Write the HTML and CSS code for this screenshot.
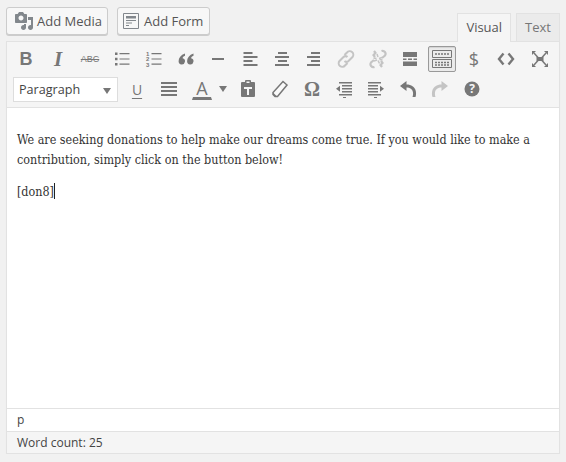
FILE: index.html
```html
<!DOCTYPE html>
<html lang="en">

<head>
    <meta charset="UTF-8">
    <meta name="viewport" content="width=device-width, initial-scale=1.0">
    <title>Edit Post</title>
    <link rel="stylesheet" href="styles.css">
</head>

<body>
    <div class="editor-top">
        <div class="media-buttons">
            <button class="btn btn-media" type="button">
                <svg class="btn-icon" width="20" height="20" viewBox="0 0 20 20">
                    <path fill="#82878c" fill-rule="evenodd" d="M13 11V4c0-.55-.45-1-1-1h-1.670L9 1H5L3.670 3H2c-.55 0-1 .45-1 1v7c0 .55.45 1 1 1h10c.55 0 1-.45 1-1zM7 4.500c1.380 0 2.500 1.120 2.500 2.500S8.380 9.500 7 9.500 4.500 8.380 4.500 7 5.620 4.500 7 4.500zM14 6h5v10.500c0 1.380-1.120 2.500-2.500 2.500S14 17.880 14 16.500s1.120-2.500 2.500-2.500c.17 0 .34.020.5.050V9h-3V6zm-4 8.050V13h2v3.500c0 1.380-1.120 2.500-2.500 2.500S7 17.880 7 16.500 8.120 14 9.500 14c.17 0 .34.020.5.050z"/>
                </svg>
                Add Media
            </button>
            <button class="btn btn-form" type="button">
                <svg class="btn-icon" width="18" height="18" viewBox="0 0 18 18">
                    <path fill="none" stroke="#82878c" d="M1.500 1.500h15v15h-15z"/>
                    <path fill="#82878c" d="M4 4h10v2.500H4zM4 8h10v1H4zM4 10.500h6v1H4zM4 13h3v1H4z"/>
                </svg>
                Add Form
            </button>
        </div>
        <div class="tabs">
            <span class="tab tab-active">Visual</span>
            <span class="tab">Text</span>
        </div>
    </div>

    <div class="editor">
        <div class="toolbar">
            <div class="tool-row">
                <span class="tool glyph-b">B</span>
                <span class="tool glyph-i">I</span>
                <span class="tool glyph-abc">ABC</span>
                <span class="tool">
                    <svg width="20" height="20" viewBox="0 0 20 20">
                        <path fill="#777" d="M3 3.500h2.500V6H3zM3 8.800h2.500v2.500H3zM3 14h2.500v2.500H3z"/>
                        <path fill="#777" d="M7.500 4h10v1.200h-10zM7.500 9.400h10v1.200h-10zM7.500 14.600h10v1.200h-10z"/>
                    </svg>
                </span>
                <span class="tool">
                    <svg width="20" height="20" viewBox="0 0 20 20">
                        <text class="ol-num" x="2" y="6.500">1</text>
                        <text class="ol-num" x="2" y="12">2</text>
                        <text class="ol-num" x="2" y="17.500">3</text>
                        <path fill="#777" d="M7.500 4h10v1.200h-10zM7.500 9.400h10v1.200h-10zM7.500 14.600h10v1.200h-10z"/>
                    </svg>
                </span>
                <span class="tool">
                    <svg width="20" height="20" viewBox="0 0 20 20">
                        <path fill="#777" d="M9 4.500v2.200c-1.500.6-2.300 1.400-2.400 2.500a3.200 3.200 0 1 1-4 3.100C2.600 8.800 4.800 6 9 4.500zM17.500 4.500v2.200c-1.500.6-2.300 1.400-2.400 2.500a3.200 3.200 0 1 1-4 3.100c0-3.500 2.200-6.300 6.400-7.800z"/>
                    </svg>
                </span>
                <span class="tool">
                    <svg width="20" height="20" viewBox="0 0 20 20"><path fill="#777" d="M4 9h12v2H4z"/></svg>
                </span>
                <span class="tool">
                    <svg width="20" height="20" viewBox="0 0 20 20"><path fill="#777" d="M3.500 3h9v2h-9zM3.500 7h14v2h-14zM3.500 11h9v2h-9zM3.500 15h14v2h-14z"/></svg>
                </span>
                <span class="tool">
                    <svg width="20" height="20" viewBox="0 0 20 20"><path fill="#777" d="M6 3h9v2H6zM3 7h14v2H3zM6 11h9v2H6zM3 15h14v2H3z"/></svg>
                </span>
                <span class="tool">
                    <svg width="20" height="20" viewBox="0 0 20 20"><path fill="#777" d="M7 3h9v2H7zM3 7h13v2H3zM7 11h9v2H7zM3 15h13v2H3z"/></svg>
                </span>
                <span class="tool">
                    <svg width="20" height="20" viewBox="0 0 20 20">
                        <path fill="none" stroke="#c4c4c4" stroke-width="2" d="M8.500 6l2.500-2.500a3 3 0 0 1 5.500 4.500l-4 4a3 3 0 0 1-4 0M11.500 14l-2.500 2.500a3 3 0 0 1-5.500-4.500l4-4a3 3 0 0 1 4 0"/>
                    </svg>
                </span>
                <span class="tool">
                    <svg width="20" height="20" viewBox="0 0 20 20">
                        <path fill="none" stroke="#c4c4c4" stroke-width="2.200" d="M6 2l1.500 2-2 2 1.500 2M13.500 2a3 3 0 0 1 3.500 4.500l-3 2.500M14 18l-1.500-2 2-2-1.500-2M6.500 18A3 3 0 0 1 3 13.500l3-2.500"/>
                        <path fill="none" stroke="#c4c4c4" stroke-width="1.500" d="M10 8l-1-3M11 9.500l3-1M9 11l-3 1M10 11.500l1.500 3M8.500 9.500l-3-.5M11.500 10.500l3 .5"/>
                    </svg>
                </span>
                <span class="tool">
                    <svg width="20" height="20" viewBox="0 0 20 20">
                        <path fill="#777" d="M3 3h14v5H3zM3 9.500h3.500V11H3zM8 9.500h4V11H8zM13.500 9.500H17V11h-3.500zM3 12.500h14V17H3z"/>
                    </svg>
                </span>
                <span class="tool tool-active">
                    <svg width="24" height="20" viewBox="0 0 24 20">
                        <path fill="none" stroke="#777" d="M2.500 1.500h19v7h-19zM2.500 10.500h19v8h-19z"/>
                        <path fill="none" stroke="#777" stroke-width="1.500" stroke-dasharray="2 1" d="M5 5h14M5 13.500h14M5 16h14"/>
                    </svg>
                </span>
                <span class="tool glyph-dollar">$</span>
                <span class="tool">
                    <svg width="20" height="20" viewBox="0 0 20 20">
                        <path fill="none" stroke="#777" stroke-width="2.400" d="M7.500 4.500L3 10l4.500 5.500M12.500 4.500L17 10l-4.500 5.500"/>
                    </svg>
                </span>
                <span class="tool tool-wide">
                    <svg width="20" height="20" viewBox="0 0 20 20">
                        <path fill="#777" d="M6.500 8h7v4h-7z"/>
                        <path fill="none" stroke="#777" stroke-width="1.500" d="M4 4l4 4.500M16 4l-4 4.500M4 16l4-4.500M16 16l-4-4.500"/>
                        <path fill="#777" d="M2 2h4L2 6zM18 2v4l-4-4zM2 18v-4l4 4zM18 18h-4l4-4z"/>
                    </svg>
                </span>
            </div>
            <div class="tool-row tool-row-second">
                <div class="format-select">
                    Paragraph
                    <span class="select-arrow"></span>
                </div>
                <span class="tool glyph-u">U</span>
                <span class="tool">
                    <svg width="20" height="20" viewBox="0 0 20 20"><path fill="#777" d="M2 3h16v2H2zM2 7h16v2H2zM2 11h16v2H2zM2 15h16v2H2z"/></svg>
                </span>
                <span class="tool glyph-a">A</span>
                <span class="color-arrow"></span>
                <span class="tool">
                    <svg width="20" height="20" viewBox="0 0 20 20">
                        <path fill="#777" fill-rule="evenodd" d="M7 3V2a1 1 0 0 1 1-1h4a1 1 0 0 1 1 1v1h3a1 1 0 0 1 1 1v13a1 1 0 0 1-1 1H4a1 1 0 0 1-1-1V4a1 1 0 0 1 1-1zM8.500 2.500v1.500h3V2.500zM6 8v2h3v6h2v-6h3V8z"/>
                    </svg>
                </span>
                <span class="tool">
                    <svg width="20" height="20" viewBox="0 0 20 20">
                        <path fill="#fafafa" stroke="#777" stroke-width="1.500" d="M13 2.500l4 3.500-9.500 11.500H5L3 15.500v-2z"/>
                        <path fill="#777" d="M3 13.500l2.500 2.500 1.500 1.500H5L3 15.500z"/>
                    </svg>
                </span>
                <span class="tool glyph-omega">Ω</span>
                <span class="tool">
                    <svg width="20" height="20" viewBox="0 0 20 20">
                        <path fill="#777" d="M5 3h13v1.500H5zM8 6h10v1.500H8zM8 9h10v1.500H8zM8 12h10v1.500H8zM5 15h13v1.500H5zM9 18h3v1H9zM2 9.700l4-3v6z"/>
                    </svg>
                </span>
                <span class="tool">
                    <svg width="20" height="20" viewBox="0 0 20 20">
                        <path fill="#777" d="M2 3h13v1.500H2zM2 6h10v1.500H2zM2 9h10v1.500H2zM2 12h10v1.500H2zM2 15h13v1.500H2zM8 18h3v1H8zM18 9.700l-4-3v6z"/>
                    </svg>
                </span>
                <span class="tool">
                    <svg width="20" height="20" viewBox="0 0 20 20">
                        <path fill="#777" d="M8.500 2L2 7l6.500 5V8.500c3.500 0 6 1.500 6.500 5 .2 1.500 0 3.300-.5 4.500h3c.7-2 .8-4.500 0-7-1-3-4-5.500-9-5.500z"/>
                    </svg>
                </span>
                <span class="tool">
                    <svg width="20" height="20" viewBox="0 0 20 20">
                        <path fill="#c4c4c4" d="M11.500 2L18 7l-6.500 5V8.500c-3.500 0-6 1.500-6.500 5-.2 1.500 0 3.300.5 4.500h-3c-.7-2-.8-4.500 0-7 1-3 4-5.500 9-5.500z"/>
                    </svg>
                </span>
                <span class="tool">
                    <svg width="20" height="20" viewBox="0 0 20 20">
                        <circle cx="10" cy="10" r="7.500" fill="#777"/>
                        <text class="help-mark" x="10" y="14.200">?</text>
                    </svg>
                </span>
            </div>
        </div>

        <div class="content">
            <p>We are seeking donations to help make our dreams come true. If you would like to make a contribution, simply click on the button below!</p>
            <p>[don8]<span class="caret"></span></p>
        </div>

        <div class="path-bar">p</div>
        <div class="word-count">Word count: 25</div>
    </div>
</body>

</html>
```

FILE: styles.css
```css
body {
    font-family: "Open Sans", sans-serif;
    background-color: #f1f1f1;
    color: #444;
    margin: 0;
    padding: 7px 6px 0 6px;
}

.editor-top {
    display: flex;
    justify-content: space-between;
    height: 34px;
}

.media-buttons {
    display: flex;
    gap: 9px;
    align-items: flex-start;
}

.btn {
    display: flex;
    align-items: center;
    height: 28px;
    font-family: "Open Sans", sans-serif;
    font-size: 13px;
    color: #555;
    background-color: #f7f7f7;
    border: 1px solid #ccc;
    border-radius: 3px;
    box-shadow: 0 1px 0 #ccc;
}

.btn-media {
    gap: 3px;
    padding: 0 5px 0 7px;
}

.btn-form {
    gap: 4px;
    padding: 0 6px 0 4px;
}

.btn-icon {
    flex: none;
}

.tabs {
    display: flex;
    align-items: flex-end;
    gap: 5px;
}

.tab {
    height: 28px;
    line-height: 26px;
    padding: 0 8px;
    font-size: 13px;
    color: #777;
    background-color: #ebebeb;
    border: 1px solid #e2e2e2;
    border-bottom: none;
    box-sizing: border-box;
}

.tab-active {
    height: 29px;
    color: #555;
    background-color: #f5f5f5;
    margin-bottom: -1px;
    position: relative;
}

.editor {
    background-color: #fff;
    border: 1px solid #e2e2e2;
    box-shadow: 0 1px 1px rgba(0, 0, 0, 0.04);
}

.toolbar {
    height: 62px;
    background-color: #f5f5f5;
    border-bottom: 1px solid #e2e2e2;
    padding: 3px 0 0 5px;
}

.tool-row {
    display: flex;
    align-items: center;
    height: 28px;
}

.tool-row-second {
    margin-top: 2px;
    padding-left: 1px;
}

.tool {
    display: flex;
    align-items: center;
    justify-content: center;
    width: 28px;
    height: 26px;
    margin-right: 4px;
    flex: none;
    color: #777;
    border: 1px solid transparent;
    box-sizing: border-box;
}

.tool-wide {
    margin-left: 2px;
}

.tool-active {
    background-color: #ebebeb;
    border: 1px solid #999;
    border-radius: 2px;
    box-shadow: inset 0 1px 1px rgba(0, 0, 0, 0.1);
}

.glyph-b {
    font-family: "Liberation Sans", sans-serif;
    font-weight: bold;
    font-size: 18px;
}

.glyph-i {
    font-family: "Liberation Serif", serif;
    font-weight: bold;
    font-style: italic;
    font-size: 21px;
}

.glyph-abc {
    font-family: "Liberation Sans", sans-serif;
    font-size: 9px;
    text-decoration: line-through;
}

.glyph-dollar {
    font-family: "Open Sans", sans-serif;
    font-size: 18px;
}

.glyph-u {
    font-family: "Open Sans", sans-serif;
    font-size: 14px;
    text-decoration: underline;
    text-underline-offset: 3px;
}

.glyph-a {
    font-family: "Open Sans", sans-serif;
    font-size: 18px;
    line-height: 20px;
    margin-right: 0;
    border-bottom: 3px solid #777;
    border-radius: 0;
    width: 20px;
    height: 22px;
    margin-left: 5px;
}

.glyph-omega {
    font-family: "Liberation Serif", serif;
    font-weight: bold;
    font-size: 20px;
}

.ol-num {
    font-family: "Liberation Sans", sans-serif;
    font-size: 6px;
    font-weight: bold;
    fill: #777;
}

.help-mark {
    font-family: "Open Sans", sans-serif;
    font-size: 12px;
    font-weight: bold;
    fill: #f5f5f5;
    text-anchor: middle;
}

.color-arrow {
    width: 0;
    height: 0;
    margin-left: 7px;
    margin-right: 7px;
    border-left: 4px solid transparent;
    border-right: 4px solid transparent;
    border-top: 6px solid #777;
    flex: none;
}

.format-select {
    position: relative;
    width: 105px;
    height: 25px;
    line-height: 24px;
    margin-right: 5px;
    padding-left: 5px;
    font-size: 12.6px;
    color: #444;
    background-color: #fff;
    border: 1px solid #ddd;
    box-sizing: border-box;
    flex: none;
}

.select-arrow {
    position: absolute;
    top: 10px;
    right: 6px;
    width: 0;
    height: 0;
    border-left: 4px solid transparent;
    border-right: 4px solid transparent;
    border-top: 6px solid #777;
}

.content {
    height: 301px;
    padding: 22px 10px 0 10px;
    box-sizing: border-box;
    font-family: "DejaVu Serif Condensed", "DejaVu Serif", serif;
    font-stretch: condensed;
    font-size: 12.45px;
    line-height: 20px;
    color: #333;
    overflow: hidden;
    border-bottom: 1px solid #e2e2e2;
}

.content p {
    margin: 0 0 12px 0;
}

.caret {
    display: inline-block;
    width: 1px;
    height: 16px;
    background-color: #222;
    vertical-align: -3px;
}

.path-bar {
    height: 22px;
    line-height: 22px;
    padding-left: 10px;
    font-size: 12px;
    color: #444;
    border-bottom: 1px solid #e2e2e2;
}

.word-count {
    height: 21px;
    line-height: 21px;
    padding-left: 10px;
    font-size: 12px;
    color: #444;
    background-color: #f5f5f5;
}
```
